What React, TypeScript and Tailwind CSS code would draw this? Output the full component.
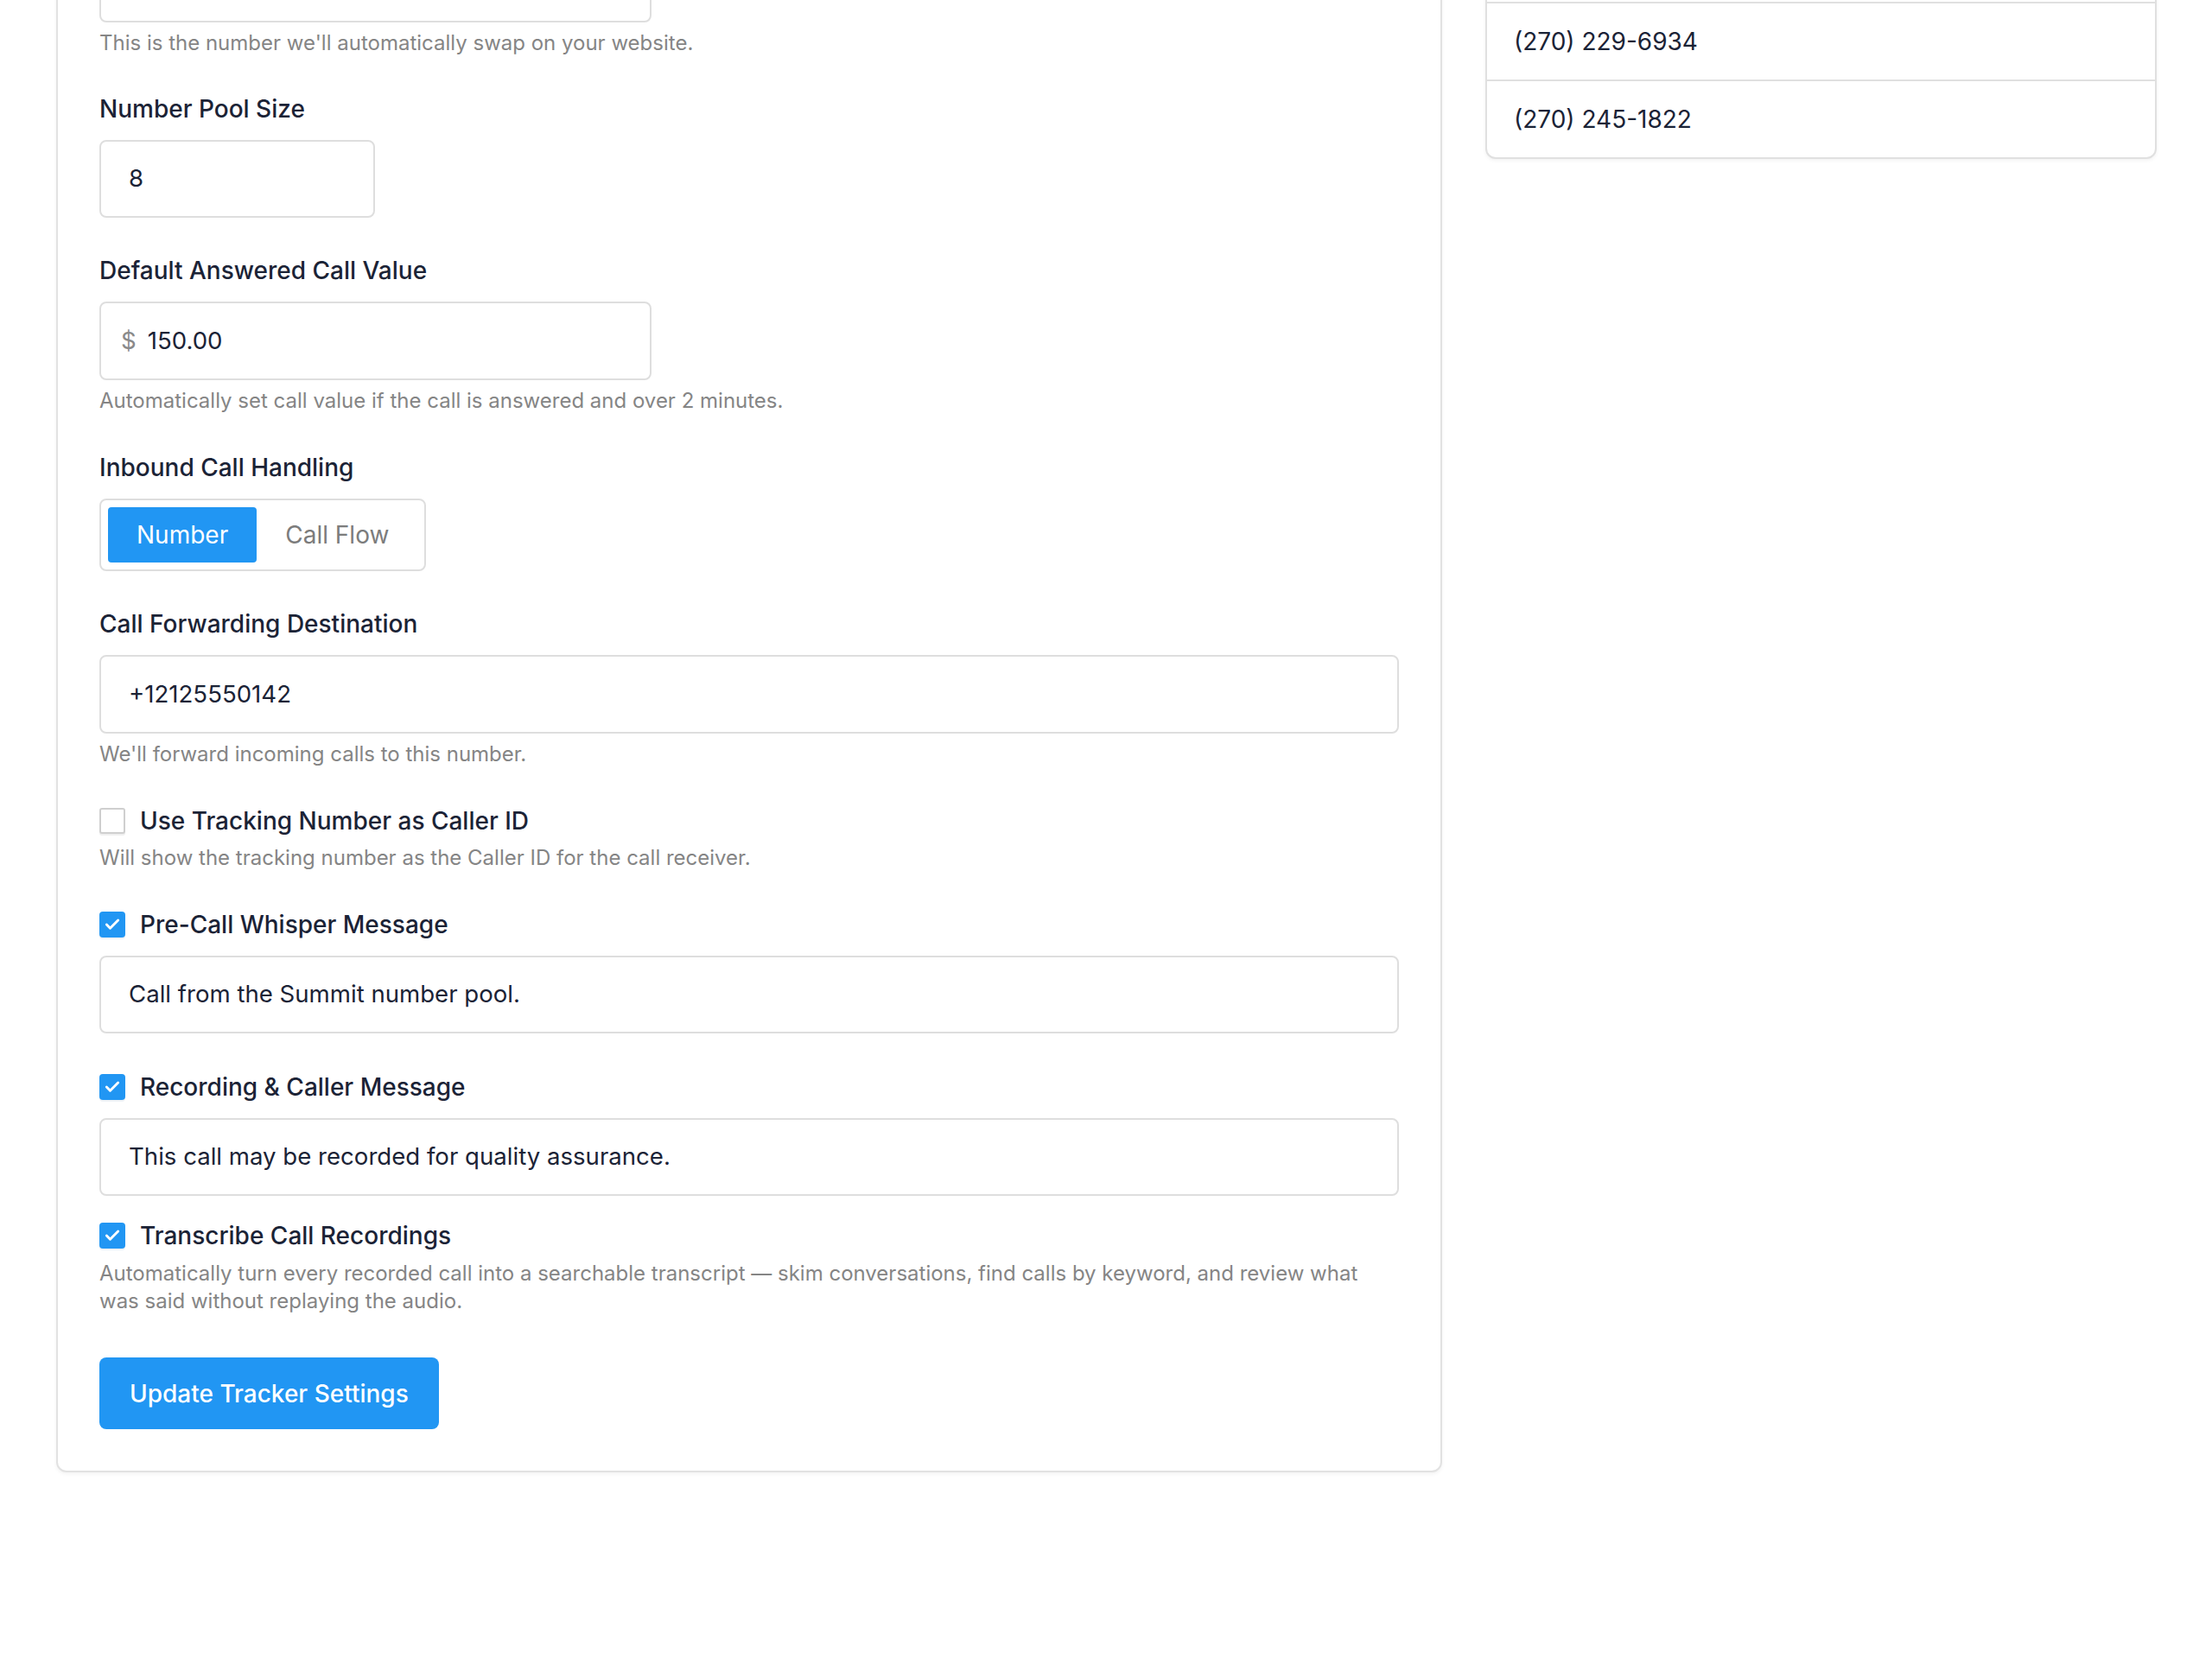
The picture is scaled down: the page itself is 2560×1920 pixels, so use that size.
import React, { useState } from 'react';
import { Check } from 'lucide-react';

const poolNumbers = [
  '(270) 201-4410',
  '(270) 204-7783',
  '(270) 212-3095',
  '(270) 215-8861',
  '(270) 218-0327',
  '(270) 224-5519',
  '(270) 229-6934',
  '(270) 245-1822',
];

function FieldLabel({ children }: { children: React.ReactNode }) {
  return <label className="block text-[28px] leading-[42px] font-medium text-[#1b2336] mb-[15px]">{children}</label>;
}

function Help({ children, className = '' }: { children: React.ReactNode; className?: string }) {
  return <p className={`text-[24px] leading-[32px] text-[#858585] ${className}`}>{children}</p>;
}

function TextInput({ value, className = '' }: { value: string; className?: string }) {
  return (
    <div className={`h-[90px] flex items-center px-[32px] border-2 border-[#dedede] rounded-[8px] bg-white text-[27.6px] text-[#1b2336] ${className}`}>
      {value}
    </div>
  );
}

function CheckRow({ label, checked, onToggle }: { label: string; checked: boolean; onToggle: () => void }) {
  return (
    <button type="button" onClick={onToggle} className="flex items-center gap-[17px] h-[42px] text-left">
      {checked ? (
        <span className="w-[30px] h-[30px] rounded-[4px] bg-[#2196f3] flex items-center justify-center shadow-[0_2px_0_#eef2f6]">
          <Check className="w-[20px] h-[20px] text-white" strokeWidth={3.5} />
        </span>
      ) : (
        <span className="w-[30px] h-[30px] rounded-[3px] border-2 border-[#cfcfcf] bg-white shadow-[0_2px_0_#efefef]" />
      )}
      <span className="text-[28px] leading-[42px] font-medium text-[#1b2336]">{label}</span>
    </button>
  );
}

export default function App() {
  const [handling, setHandling] = useState<'number' | 'flow'>('number');
  const [callerId, setCallerId] = useState(false);
  const [whisper, setWhisper] = useState(true);
  const [recording, setRecording] = useState(true);
  const [transcribe, setTranscribe] = useState(true);

  return (
    <div className="min-h-screen bg-white overflow-hidden" style={{ fontFamily: 'Inter, "Noto Sans", sans-serif' }}>
      <div className="flex items-start gap-[50px] pl-[65px]">
        {/* Tracker settings form */}
        <div className="w-[1604px] -mt-[171px] border-2 border-[#e2e2e2] rounded-[12px] bg-white px-[48px] pt-[48px] pb-[48px] shadow-[0_2px_4px_rgba(0,0,0,0.05)]">
          <div className="mb-[39px]">
            <FieldLabel>Swap Number</FieldLabel>
            <TextInput value="(270) 229-6934" className="w-[639px]" />
            <Help className="mt-[8px]">This is the number we'll automatically swap on your website.</Help>
          </div>

          <div className="mb-[40px]">
            <FieldLabel>Number Pool Size</FieldLabel>
            <TextInput value="8" className="w-[319px]" />
          </div>

          <div className="mb-[40px]">
            <FieldLabel>Default Answered Call Value</FieldLabel>
            <div className="w-[639px] h-[91px] flex items-center pl-[23px] border-2 border-[#dedede] rounded-[8px] text-[27.6px]">
              <span className="text-[#8a8a8a] mr-[13px]">$</span>
              <span className="text-[#1b2336]">150.00</span>
            </div>
            <Help className="mt-[8px]">Automatically set call value if the call is answered and over 2 minutes.</Help>
          </div>

          <div className="mb-[40px]">
            <FieldLabel>Inbound Call Handling</FieldLabel>
            <div className="inline-flex p-[8px] border-2 border-[#dedede] rounded-[8px]">
              <button
                type="button"
                onClick={() => setHandling('number')}
                className={`h-[64px] px-[33px] rounded-[4px] text-[28px] ${handling === 'number' ? 'bg-[#2196f3] text-white' : 'text-[#7c7c7c]'}`}
              >
                Number
              </button>
              <button
                type="button"
                onClick={() => setHandling('flow')}
                className={`h-[64px] px-[33px] rounded-[4px] text-[28px] ${handling === 'flow' ? 'bg-[#2196f3] text-white' : 'text-[#7c7c7c]'}`}
              >
                Call Flow
              </button>
            </div>
          </div>

          <div className="mb-[40px]">
            <FieldLabel>Call Forwarding Destination</FieldLabel>
            <div className="h-[91px] flex items-center px-[32px] border-2 border-[#dedede] rounded-[8px] text-[27.6px] text-[#1b2336]">+12125550142</div>
            <Help className="mt-[8px]">We'll forward incoming calls to this number.</Help>
          </div>

          <div className="mb-[40px]">
            <CheckRow label="Use Tracking Number as Caller ID" checked={callerId} onToggle={() => setCallerId(!callerId)} />
            <Help className="mt-[6px]">Will show the tracking number as the Caller ID for the call receiver.</Help>
          </div>

          <div className="mb-[41px]">
            <div className="mb-[15px]">
              <CheckRow label="Pre-Call Whisper Message" checked={whisper} onToggle={() => setWhisper(!whisper)} />
            </div>
            <TextInput value="Call from the Summit number pool." />
          </div>

          <div className="mb-[25px]">
            <div className="mb-[15px]">
              <CheckRow label="Recording & Caller Message" checked={recording} onToggle={() => setRecording(!recording)} />
            </div>
            <TextInput value="This call may be recorded for quality assurance." />
          </div>

          <div className="mb-[49px]">
            <CheckRow label="Transcribe Call Recordings" checked={transcribe} onToggle={() => setTranscribe(!transcribe)} />
            <Help className="mt-[7px]">
              Automatically turn every recorded call into a searchable transcript — skim conversations, find calls by keyword, and review what was said without replaying the audio.
            </Help>
          </div>

          <button type="button" className="h-[83px] px-[35px] rounded-[8px] bg-[#2196f3] text-white text-[28px] font-medium">
            Update Tracker Settings
          </button>
        </div>

        {/* Number pool list */}
        <div className="w-[777px] -mt-[538px] border-2 border-[#e0e0e0] rounded-[12px] overflow-hidden bg-white shadow-[0_2px_4px_rgba(0,0,0,0.05)]">
          {poolNumbers.map((n, i) => (
            <div
              key={n}
              className={`h-[88px] flex items-center px-[31px] text-[28px] text-[#1b2336] box-content ${i > 0 ? 'border-t-2 border-[#e0e0e0]' : ''}`}
            >
              {n}
            </div>
          ))}
        </div>
      </div>
    </div>
  );
}
